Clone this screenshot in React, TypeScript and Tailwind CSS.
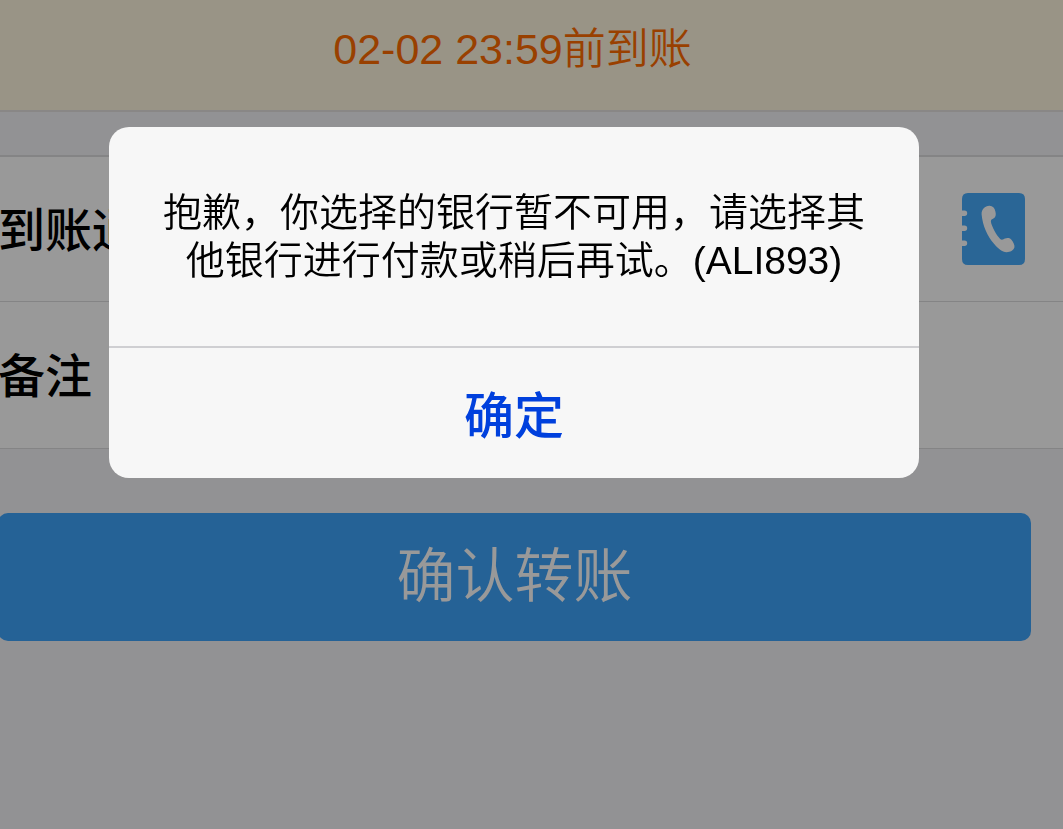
import React, { useState } from 'react';

interface AlertDialogProps {
  message: string;
  confirmText: string;
  onConfirm: () => void;
}

const ContactIcon: React.FC = () => (
  <svg width="64" height="72" viewBox="0 0 64 72" aria-hidden="true">
    <path
      fill="#46aafa"
      d="M6 0H57Q63 0 63 6V66Q63 72 57 72H6Q0 72 0 66V53H2.5A2.7 2.7 0 0 0 2.5 47.6H0V38H2.5A2.7 2.7 0 0 0 2.5 32.6H0V23H2.5A2.7 2.7 0 0 0 2.5 17.6H0V6Q0 0 6 0Z"
    />
    <path
      fill="#ffffff"
      d="M27.3 12.8C30.4 12.6 32.6 15 33.4 18.4C34.2 21.4 33.8 24 31.8 25.2C30 26.2 28.6 26.6 28.9 28.8C29.6 33.4 34.6 42.4 38.2 46C39.8 47.6 41.6 46.3 43 45.6C45 44.8 47.6 44.8 49.2 46.6C51.4 49 53 52.6 52.4 54.6C51.4 57.4 48 59.4 44.6 59.3C40 59 36.2 55.6 32.2 51C25.4 43.2 20.6 32.4 19.6 21.4C19.3 16.4 23 13.1 27.3 12.8Z"
    />
  </svg>
);

const AlertDialog: React.FC<AlertDialogProps> = ({ message, confirmText, onConfirm }) => (
  <div className="fixed inset-0 flex items-start justify-center bg-black/40 pt-[127px] pr-[35px]">
    <div
      role="alertdialog"
      aria-modal="true"
      aria-describedby="alert-message"
      className="w-full max-w-[810px] overflow-hidden rounded-[20px] bg-[#f7f7f7]"
    >
      <p
        id="alert-message"
        className="px-12 pt-[62px] pb-[61px] text-center text-[39px] leading-[48px] font-[350] text-black"
      >
        {message}
      </p>
      <button
        type="button"
        onClick={onConfirm}
        className="block h-[132px] w-full border-t-2 border-[#cfcfd2] pt-2 text-[50px] font-medium text-[#0040dd]"
      >
        {confirmText}
      </button>
    </div>
  </div>
);

const App: React.FC = () => {
  const [alertOpen, setAlertOpen] = useState(true);
  const [phone, setPhone] = useState('');
  const [remark, setRemark] = useState('');

  return (
    <div
      lang="zh-CN"
      className="min-h-screen overflow-hidden bg-[#f4f4f7] font-['Liberation_Sans','Noto_Sans_CJK_SC',sans-serif]"
    >
      {/* Arrival time */}
      <header className="flex h-28 items-center justify-center border-b-2 border-[#e4e2e0] bg-[#fff7e0] pr-[38px] pb-3 text-[43px] leading-none font-[350] text-[#ff6c00]">
        02-02 23:59前到账
      </header>

      <form onSubmit={(e) => e.preventDefault()}>
        <div className="mt-[43px] border-t-2 border-[#dcdcde] bg-white text-[47px] font-medium text-black">
          <div className="flex h-[145px] items-center border-b border-[#dcdcde] pr-[37px]">
            <label htmlFor="phone" className="-ml-0.5 shrink-0 pt-1">到账通知</label>
            <input
              id="phone"
              type="tel"
              value={phone}
              onChange={(e) => setPhone(e.target.value)}
              className="min-w-0 flex-1 bg-transparent px-8 outline-none"
            />
            <button type="button" aria-label="通讯录">
              <ContactIcon />
            </button>
          </div>
          <div className="flex h-[147px] items-center border-b border-[#dcdcde] pr-[37px]">
            <label htmlFor="remark" className="-ml-0.5 shrink-0 pt-1">备注</label>
            <input
              id="remark"
              type="text"
              value={remark}
              onChange={(e) => setRemark(e.target.value)}
              className="min-w-0 flex-1 bg-transparent px-8 outline-none"
            />
          </div>
        </div>

        <div className="mt-16 -ml-0.5 pr-8">
          <button
            type="submit"
            onClick={() => setAlertOpen(true)}
            className="h-32 w-full rounded-[10px] bg-[#3ea3fb] text-[59px] font-[350] text-white"
          >
            确认转账
          </button>
        </div>
      </form>

      {alertOpen && (
        <AlertDialog
          message="抱歉，你选择的银行暂不可用，请选择其他银行进行付款或稍后再试。(ALI893)"
          confirmText="确定"
          onConfirm={() => setAlertOpen(false)}
        />
      )}
    </div>
  );
};

export default App;
